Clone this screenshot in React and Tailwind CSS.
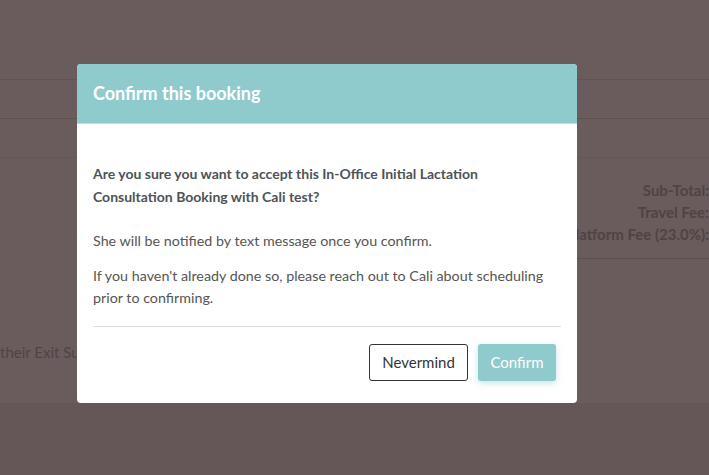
import React from 'react';

const FeeRow = ({ label }) => (
  <div className="text-right text-[15px] font-bold leading-[22px] text-[#4f4343] whitespace-nowrap">{label}</div>
);

const App = () => {
  return (
    <div className="relative w-[709px] h-[475px] overflow-hidden bg-[#655757]" style={{ fontFamily: 'Lato, "Open Sans", sans-serif' }}>
      {/* Page behind the overlay */}
      <div className="h-[403px] bg-[#6a5c5c]">
        <div className="h-[80px] border-b border-[#625454]" />
        <div className="h-[39px] border-b border-[#5f5151]" />
        <div className="h-[39px] border-b border-[#655757]" />
        <div className="flex justify-end pt-[21px]">
          <div className="w-[132px] overflow-hidden flex flex-col items-end">
            <FeeRow label="Sub-Total:" />
            <FeeRow label="Travel Fee:" />
            <FeeRow label="Platform Fee (23.0%):" />
            <div className="w-full border-b border-[#5c4f4f] mt-[13px]" />
          </div>
        </div>
        <div className="mt-[82px] text-[15px] text-[#4f4444] whitespace-nowrap">their Exit Survey</div>
      </div>

      {/* Modal */}
      <div className="absolute left-[77px] top-[64px] w-[500px] bg-white rounded-[4px] overflow-hidden">
        <div className="h-[60px] bg-[#8fcacd] border-b border-[#b8dfe1] flex items-center px-4">
          <h2 className="text-[18px] font-bold text-white">Confirm this booking</h2>
        </div>
        <div className="px-4 pt-[38px] pb-[22px]">
          <p className="text-[14px] font-bold leading-[23px] text-[#4d5358] mb-[21px] pr-[60px]">
            Are you sure you want to accept this In-Office Initial Lactation Consultation Booking with Cali test?
          </p>
          <p className="text-[14.3px] leading-[23px] text-[#555555] mb-[13px]">
            She will be notified by text message once you confirm.
          </p>
          <p className="text-[14.3px] leading-[22px] text-[#555555]">
            If you haven't already done so, please reach out to Cali about scheduling prior to confirming.
          </p>
          <div className="border-t border-[#dddddd] mt-[17px] mb-[17px]" />
          <div className="flex justify-end gap-[10px] pr-[5px]">
            <button className="w-[99px] h-[37px] border border-[#333333] rounded-[3px] text-[15px] text-[#333333] bg-white">
              Nevermind
            </button>
            <button className="w-[78px] h-[37px] rounded-[3px] text-[15px] text-white bg-[#8fcacd] shadow-[0_2px_6px_rgba(143,202,205,0.5)]">
              Confirm
            </button>
          </div>
        </div>
      </div>
    </div>
  );
};

export default App;
